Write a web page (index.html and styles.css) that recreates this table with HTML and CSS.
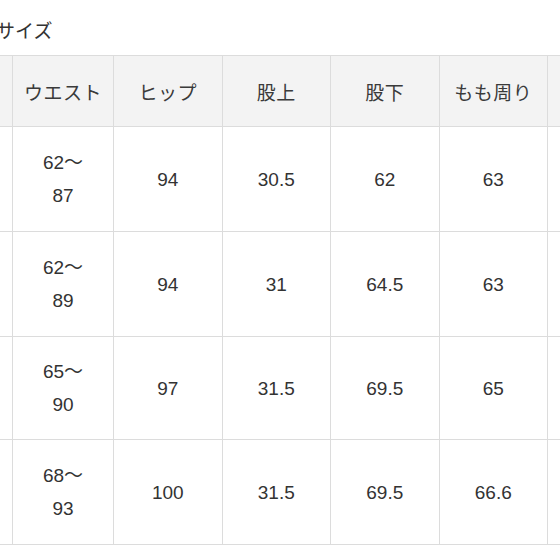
FILE: index.html
```html
<!DOCTYPE html>
<html lang="ja">
<head>
<meta charset="utf-8">
<link rel="stylesheet" href="styles.css">
</head>
<body>
<div class="page">
  <div class="title">サイズ</div>
  <table class="size-table">
    <colgroup>
      <col class="c-first">
      <col class="c-waist">
      <col class="c-std">
      <col class="c-std">
      <col class="c-std">
      <col class="c-std">
      <col class="c-last">
    </colgroup>
    <thead>
      <tr>
        <th>サイズ</th>
        <th>ウエスト</th>
        <th>ヒップ</th>
        <th>股上</th>
        <th>股下</th>
        <th>もも周り</th>
        <th>裾幅</th>
      </tr>
    </thead>
    <tbody>
      <tr class="r1">
        <td>S</td>
        <td>62～<br>87</td>
        <td>94</td>
        <td>30.5</td>
        <td>62</td>
        <td>63</td>
        <td>20</td>
      </tr>
      <tr class="r2">
        <td>M</td>
        <td>62～<br>89</td>
        <td>94</td>
        <td>31</td>
        <td>64.5</td>
        <td>63</td>
        <td>20</td>
      </tr>
      <tr class="r3">
        <td>L</td>
        <td>65～<br>90</td>
        <td>97</td>
        <td>31.5</td>
        <td>69.5</td>
        <td>65</td>
        <td>21</td>
      </tr>
      <tr class="r4">
        <td>XL</td>
        <td>68～<br>93</td>
        <td>100</td>
        <td>31.5</td>
        <td>69.5</td>
        <td>66.6</td>
        <td>21</td>
      </tr>
    </tbody>
  </table>
</div>
</body>
</html>
```

FILE: styles.css
```css
html, body {
  margin: 0;
  padding: 0;
  background: #ffffff;
}

.page {
  width: 560px;
  height: 560px;
  overflow: hidden;
  font-family: "Liberation Sans", "Noto Sans CJK JP", sans-serif;
  color: #333333;
}

.title {
  font-family: "Noto Sans CJK JP", sans-serif;
  font-size: 19px;
  line-height: 24px;
  padding-top: 18px;
  margin-left: -4px;
  height: 37px;
  box-sizing: border-box;
  white-space: nowrap;
  color: #333333;
}

.size-table {
  border-collapse: collapse;
  table-layout: fixed;
  width: 743px;
  margin-left: -88px;
  margin-top: 18px;
  font-size: 19px;
}

.c-first { width: 100px; }
.c-waist { width: 101px; }
.c-std { width: 108.5px; }
.c-last { width: 108px; }

.size-table th,
.size-table td {
  border: 1px solid #dcdcdc;
  text-align: center;
  vertical-align: middle;
  line-height: 33px;
  padding: 0;
  font-weight: normal;
}

.size-table th {
  background: #f3f3f3;
  height: 70px;
  font-family: "Noto Sans CJK JP", sans-serif;
  color: #3a3a3a;
  letter-spacing: 0.5px;
}

.size-table tbody tr { height: 105px; }
.size-table tbody tr.r3 { height: 103px; }
```
